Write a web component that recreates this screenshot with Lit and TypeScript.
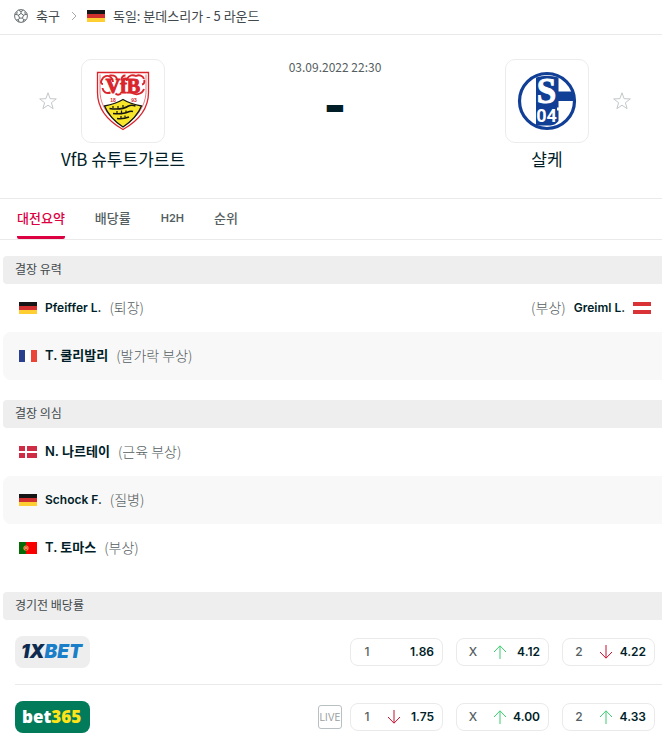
import { LitElement, html, css, svg, nothing } from "lit";
import { customElement, property } from "lit/decorators.js";
import { classMap } from "lit/directives/class-map.js";

type Country = "de" | "at" | "fr" | "dk" | "pt";

interface Absence {
  name: string;
  reason: string;
  country: Country;
}

interface AbsenceRow {
  home?: Absence;
  away?: Absence;
}

interface Odd {
  outcome: string;
  value: string;
  trend?: "up" | "down";
}

const likely: AbsenceRow[] = [
  {
    home: { name: "Pfeiffer L.", reason: "(퇴장)", country: "de" },
    away: { name: "Greiml L.", reason: "(부상)", country: "at" },
  },
  { home: { name: "T. 쿨리발리", reason: "(발가락 부상)", country: "fr" } },
];

const doubtful: AbsenceRow[] = [
  { home: { name: "N. 나르테이", reason: "(근육 부상)", country: "dk" } },
  { home: { name: "Schock F.", reason: "(질병)", country: "de" } },
  { home: { name: "T. 토마스", reason: "(부상)", country: "pt" } },
];

const bookmakers: { id: "xbet" | "bet365"; live: boolean; odds: Odd[] }[] = [
  {
    id: "xbet",
    live: false,
    odds: [
      { outcome: "1", value: "1.86" },
      { outcome: "X", value: "4.12", trend: "up" },
      { outcome: "2", value: "4.22", trend: "down" },
    ],
  },
  {
    id: "bet365",
    live: true,
    odds: [
      { outcome: "1", value: "1.75", trend: "down" },
      { outcome: "X", value: "4.00", trend: "up" },
      { outcome: "2", value: "4.33", trend: "up" },
    ],
  },
];

const flagShapes = {
  de: svg`<path fill="#151515" d="M0 0h18v4H0z"/><path fill="#d22f2f" d="M0 4h18v4H0z"/><path fill="#ffce32" d="M0 8h18v4H0z"/>`,
  at: svg`<path fill="#d93237" d="M0 0h18v12H0z"/><path fill="#fff" d="M0 4h18v4H0z"/>`,
  fr: svg`<path fill="#2b3f8f" d="M0 0h6v12H0z"/><path fill="#fff" d="M6 0h6v12H6z"/><path fill="#ea4438" d="M12 0h6v12h-6z"/>`,
  dk: svg`<path fill="#cf2d45" d="M0 0h18v12H0z"/><path fill="#fff" d="M6 0h2v12H6zM0 5h18v2H0z"/>`,
  pt: svg`<path fill="#f80000" d="M0 0h18v12H0z"/><path fill="#066a06" d="M0 0h7v12H0z"/><circle cx="7" cy="6" r="2.6" fill="#e8a53a"/><path fill="#d8372c" d="M5.6 4.6h2.8v2.2a1.4 1.4 0 0 1-2.8 0z"/><path fill="#f6e8dc" d="M6.4 5.2h1.2v1.6H6.4z"/>`,
};

@customElement("country-flag")
export class CountryFlag extends LitElement {
  @property() country: Country = "de";

  static styles = css`
    :host {
      display: block;
      flex: none;
      width: 18px;
      height: 12px;
    }
    .flag {
      display: block;
      width: 100%;
      height: 100%;
    }
  `;

  render() {
    return html`<svg class="flag" viewBox="0 0 18 12" aria-hidden="true">${flagShapes[this.country]}</svg>`;
  }
}

const ball = html`<svg class="ball" viewBox="0 0 14 14" aria-hidden="true">
  <circle cx="7" cy="7" r="6.4" />
  <path d="M7 4.4 9.5 6.2 8.5 9.1H5.5L4.5 6.2z" />
  <path d="M7 4.4V2.6M9.5 6.2l1.9-.6M8.5 9.1l1.1 1.6M5.5 9.1l-1.1 1.6M4.5 6.2l-1.9-.6" />
  <path d="M4.6 1.2 7 2.6l2.4-1.4M13.2 5.2l-1.8.4-.6-2.8M11.8 11l-2.2-.3L9 13M2.2 11l2.2-.3L5 13M.8 5.2l1.8.4.6-2.8" />
</svg>`;

const star = html`<svg class="star" viewBox="0 0 20 20" aria-hidden="true">
  <path d="M10 1.8l2.1 5.9 6.2.2-4.9 3.8 1.7 6-5.1-3.5-5.1 3.5 1.7-6L1.7 7.9l6.2-.2z" />
</svg>`;

const stuttgart = html`<svg class="crest" viewBox="0 0 60 60" role="img" aria-label="VfB">
  <path d="M4.5 1.5h51v20C55.5 38 45 50 30 58.5 15 50 4.5 38 4.5 21.5z" fill="#fff" stroke="#d9252b" stroke-width="1.3" />
  <path d="M7 3.5V22C8 36 16.5 47.5 30 55.5 43.5 47.5 52 36 53 22V3.5" fill="none" stroke="#d9252b" stroke-width=".6" />
  <text class="vfb" text-anchor="middle"><tspan x="30" y="22">VfB</tspan><tspan class="year" x="20" y="31">18</tspan><tspan class="year" x="41" y="31">93</tspan></text>
  <path d="M8.5 9.5c2-5 6-5.500 9-3.500 2 1.500 2.500 3 2.500 5M10 13c-2 0-2.500-2-1.500-3.500M16.500 4.500c4-.5 7 1 7.500 4M9.500 17c.5 4 4 6 8 4.500M34 8c2-4 6-4.500 9-3 3-1.500 7-.5 8 3M51 9c1 2 0 4-2 4.500M38 21.500c5 3 11 2 13-3.500M32.500 4.500c-2.500 0-4 2-4 5M28 22.500c-2 1.500-4 1.500-5.500 0" fill="none" stroke="#d9252b" stroke-width="1.9" />
  <path d="M30 28.5c5 3 11 5 18.5 6.5C45 43.5 39 50 30 56 21 50 15 43.5 11.5 35 19 33.5 25 31.5 30 28.5z" fill="#f8e62b" stroke="#151515" stroke-width="1.3" />
  <g fill="none" stroke="#151515" stroke-width="1.5">
    <path d="M16.5 37.5c6 1 14 .5 19-2.500 2-1 5-.8 7 0M20 42.500c6 .5 11 .5 15-1.500 2-1 3-1 5-.5M24 47.500c4 .5 8 0 12-1.500" />
    <path d="M20 37v-2M25 37.5v-2.500M30 36.500v-2.500M24 42v-2M28.500 42v-2.500M33 41.500v-2M28 47v-2M32 46.500v-2" stroke-width="1.2" />
  </g>
</svg>`;

const schalke = html`<svg class="crest" viewBox="0 0 60 60" role="img" aria-label="S04">
  <circle cx="30" cy="30" r="27.5" fill="#fff" stroke="#123f96" stroke-width="3.2" />
  <path d="M19 6.5q11-3.500 22.500 0V20.500H57v9.500H41.500v6.500H40v3h1.500V50q-3 4-8 4.500H19z" fill="#123f96" />
  <text class="s" text-anchor="middle"><tspan x="29.5" y="32">S</tspan><tspan class="year04" x="29.5" y="51">04</tspan></text>
</svg>`;

const xbet = html`<svg class="brand" viewBox="0 0 75 32" role="img" aria-label="1XBET">
  <text class="xbet" x="6" y="22"><tspan fill="#0d2b50">1X</tspan><tspan fill="#1a7fc8">BET</tspan></text>
</svg>`;

const bet365 = html`<svg class="brand" viewBox="0 0 75 32" role="img" aria-label="bet365">
  <text class="b365" x="7" y="22"><tspan fill="#fff">bet</tspan><tspan fill="#ffe418">365</tspan></text>
</svg>`;

const arrow = (trend: "up" | "down") => html`<svg class="arrow ${trend}" viewBox="0 0 14 14" role="img" aria-label=${trend}>
  <path d=${trend === "up" ? "M7 14V1M1 7l6-6.200L13 7" : "M7 0v13M1 7l6 6.200L13 7"} />
</svg>`;

@customElement("app-root")
export class AppRoot extends LitElement {
  static styles = css`
    :host {
      display: block;
      overflow-x: hidden;
      background: #fff;
      color: #001e28;
      font-family: "Noto Sans CJK KR", sans-serif;
      font-size: 13px;
      line-height: 20px;
    }
    * {
      box-sizing: border-box;
    }
    a {
      color: inherit;
      text-decoration: none;
    }
    button {
      margin: 0;
      padding: 0;
      border: 0;
      background: none;
      font: inherit;
      color: inherit;
      cursor: pointer;
    }
    .crumbs {
      display: flex;
      align-items: center;
      height: 35px;
      padding: 0 14px 2px;
      border-bottom: 1px solid #eaeaea;
      color: #42494c;
    }
    .sport {
      display: flex;
      align-items: center;
      gap: 8px;
    }
    .ball {
      width: 14px;
      height: 14px;
      fill: none;
      stroke: #555e61;
      stroke-width: 0.9;
    }
    .chevron {
      width: 6px;
      height: 10px;
      margin: 0 10px 0 11px;
      fill: none;
      stroke: #a5abad;
    }
    .league {
      margin-left: 8px;
    }
    .match {
      display: grid;
      grid-template-columns: 1fr 194px 1fr;
      height: 164px;
      padding: 24px 0 0 8px;
      border-bottom: 1px solid #eaeaea;
      text-align: center;
    }
    .badges {
      display: grid;
      grid-template-columns: 20px 84px 20px;
      gap: 23px;
      align-items: center;
      justify-content: center;
    }
    .star {
      display: block;
      width: 20px;
      height: 20px;
      fill: none;
      stroke: #c3c8ca;
    }
    .badge {
      grid-column: 2;
      grid-row: 1;
      display: grid;
      place-items: center;
      height: 84px;
      border: 1px solid #ececec;
      border-radius: 10px;
    }
    .favourite {
      grid-column: 1;
      grid-row: 1;
    }
    .away .favourite {
      grid-column: 3;
    }
    .crest {
      display: block;
      width: 60px;
      height: 60px;
    }
    .vfb {
      font: 700 20px "Liberation Serif", serif;
      fill: #d9252b;
      stroke: #d9252b;
    }
    .year {
      font: 700 5px "Liberation Sans", sans-serif;
      stroke: none;
    }
    .s {
      font: 700 35px "Liberation Serif", serif;
      fill: #fff;
      stroke: #fff;
    }
    .year04 {
      font: 700 18px Roboto, sans-serif;
      stroke: none;
    }
    .team {
      margin: 5px 0 0;
      font-size: 17px;
      font-weight: 400;
      line-height: 22px;
    }
    .date {
      margin: 0;
      font-size: 12px;
      line-height: 16px;
      color: #555e61;
    }
    .score {
      margin: 0;
      font: 900 48px/60px Inter, sans-serif;
    }
    .tabs {
      display: flex;
      gap: 30px;
      height: 41px;
      padding: 0 17px;
      border-bottom: 1px solid #eaeaea;
      font-weight: 500;
      color: #555e61;
    }
    .tab {
      height: 40px;
      border-bottom: 3px solid transparent;
    }
    .tab.latin {
      font: 600 11px/20px Inter, sans-serif;
    }
    .tab.active {
      border-color: #dc0042;
      border-radius: 2px;
      color: #dc0042;
    }
    .content {
      display: flex;
      flex-direction: column;
      gap: 20px;
      padding: 16px 0 0 3px;
    }
    .heading {
      margin: 0;
      height: 28px;
      padding: 0 12px;
      border-radius: 4px 0 0 4px;
      background: #eeeeee;
      font-size: 12px;
      font-weight: 400;
      line-height: 26px;
      color: #42494c;
    }
    .row {
      display: flex;
      justify-content: space-between;
      height: 48px;
      padding: 0 11px 0 16px;
      border-radius: 8px 0 0 8px;
    }
    .row:nth-of-type(even) {
      background: #f8f8f8;
    }
    .player {
      display: flex;
      align-items: center;
      gap: 8px;
    }
    .player.away {
      flex-direction: row-reverse;
      margin-left: auto;
    }
    .name {
      font-family: Inter, "Noto Sans CJK KR", sans-serif;
      font-size: 12px;
      font-weight: 600;
    }
    .name.korean {
      padding-bottom: 2px;
      font-size: 13px;
    }
    .reason {
      padding-bottom: 3px;
      font-size: 14px;
      font-weight: 300;
      color: #555e61;
    }
    .offer {
      display: flex;
      align-items: center;
      gap: 8px;
      margin-left: 12px;
      padding: 16px 7px 16px 0;
      border-bottom: 1px solid #eaeaea;
    }
    .offer:last-child {
      padding-bottom: 0;
      border-bottom: 0;
    }
    .bookmaker {
      width: 75px;
      height: 32px;
      margin-right: auto;
      border-radius: 8px;
      background: #eeeeee;
    }
    .bookmaker.bet365 {
      background: #027b5b;
    }
    .brand {
      display: block;
      width: 75px;
      height: 32px;
    }
    .xbet {
      font: italic 900 19px Inter, sans-serif;
    }
    .b365 {
      font: 800 17px "Open Sans", sans-serif;
      stroke-width: 0.3;
    }
    .live {
      width: 24px;
      height: 24px;
      border: 1px solid #b9c0c3;
      border-radius: 3px;
      font: 400 10px/22px Inter, sans-serif;
      text-align: center;
      color: #999fa1;
    }
    .odds {
      display: flex;
      gap: 13px;
    }
    .odd {
      display: grid;
      grid-template-columns: 10px 1fr 32px;
      align-items: center;
      width: 93px;
      height: 28px;
      padding: 0 8px 0 11px;
      border: 1px solid #eaeaea;
      border-radius: 8px;
      font: 600 12px/16px Inter, sans-serif;
    }
    .outcome {
      font-weight: 500;
      color: #555e61;
    }
    .value {
      grid-column: 3;
      text-align: right;
    }
    .arrow {
      width: 14px;
      height: 14px;
      margin-right: 1px;
      justify-self: end;
      fill: none;
    }
    .up {
      stroke: #3ccb70;
    }
    .down {
      stroke: #c8102e;
    }
  `;

  private player(p: Absence | undefined, away = false) {
    if (!p) return nothing;
    return html`<div class=${classMap({ player: true, away })}>
      <country-flag .country=${p.country}></country-flag>
      <a href="#" class=${classMap({ name: true, korean: /[가-힣]/.test(p.name) })}>${p.name}</a>
      <span class="reason">${p.reason}</span>
    </div>`;
  }

  private absences(title: string, rows: AbsenceRow[]) {
    return html`<section>
      <h2 class="heading">${title}</h2>
      ${rows.map((r) => html`<div class="row">${this.player(r.home)}${this.player(r.away, true)}</div>`)}
    </section>`;
  }

  render() {
    return html`
      <nav class="crumbs">
        <a class="sport" href="#">${ball}<span>축구</span></a>
        <svg class="chevron" viewBox="0 0 6 10" aria-hidden="true"><path d="M1 1l4 4-4 4" /></svg>
        <country-flag country="de"></country-flag>
        <a class="league" href="#">독일: 분데스리가 - 5 라운드</a>
      </nav>
      <header class="match">
        <div>
          <div class="badges">
            <button class="favourite" aria-label="즐겨찾기">${star}</button>
            <a class="badge" href="#">${stuttgart}</a>
          </div>
          <p class="team"><a href="#">VfB 슈투트가르트</a></p>
        </div>
        <div>
          <p class="date">03.09.2022 22:30</p>
          <p class="score">-</p>
        </div>
        <div>
          <div class="badges away">
            <a class="badge" href="#">${schalke}</a>
            <button class="favourite" aria-label="즐겨찾기">${star}</button>
          </div>
          <p class="team"><a href="#">샬케</a></p>
        </div>
      </header>
      <nav class="tabs">
        <button class="tab active">대전요약</button>
        <button class="tab">배당률</button>
        <button class="tab latin">H2H</button>
        <button class="tab">순위</button>
      </nav>
      <main class="content">
        ${this.absences("결장 유력", likely)} ${this.absences("결장 의심", doubtful)}
        <section>
          <h2 class="heading">경기전 배당률</h2>
          ${bookmakers.map(
            (b) => html`<div class="offer">
              <a href="#" class="bookmaker ${b.id}">${b.id === "xbet" ? xbet : bet365}</a>
              ${b.live ? html`<span class="live">LIVE</span>` : nothing}
              <div class="odds">
                ${b.odds.map(
                  (o) => html`<button class="odd">
                    <span class="outcome">${o.outcome}</span>
                    ${o.trend ? arrow(o.trend) : nothing}
                    <span class="value">${o.value}</span>
                  </button>`
                )}
              </div>
            </div>`
          )}
        </section>
      </main>
    `;
  }
}
